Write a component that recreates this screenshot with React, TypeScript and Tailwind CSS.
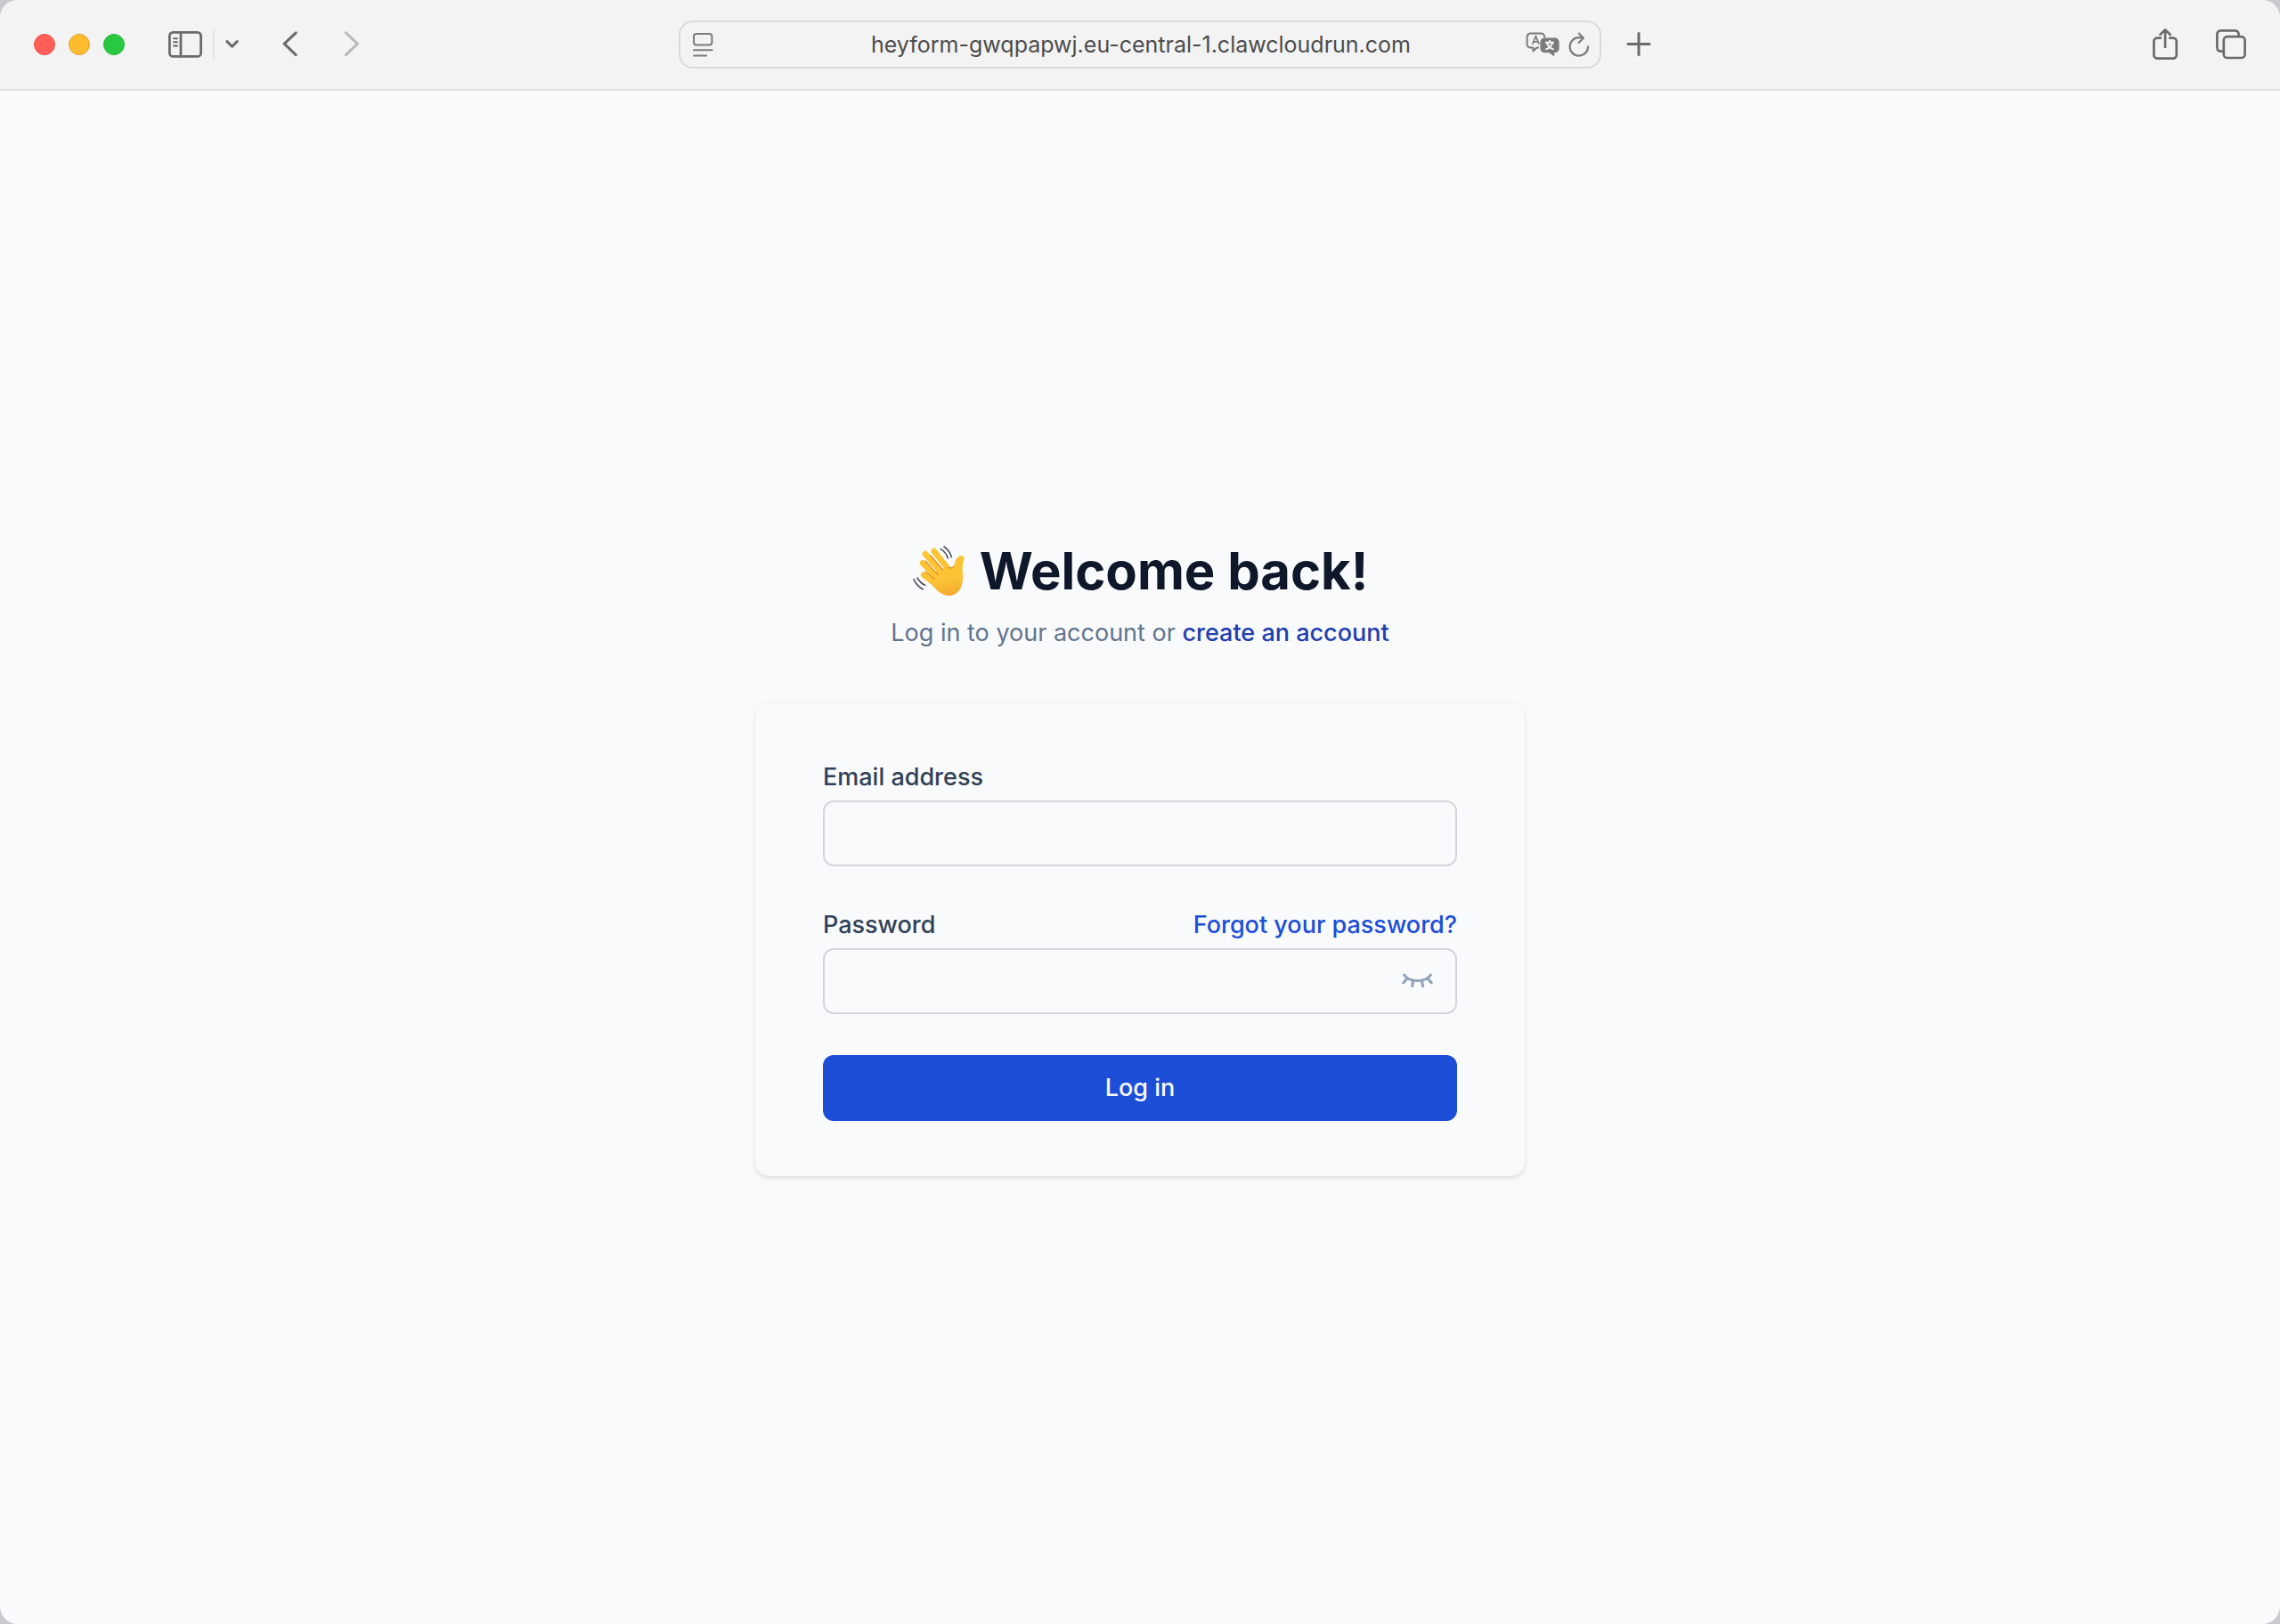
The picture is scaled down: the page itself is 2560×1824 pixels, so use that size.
import { useState } from 'react';
import type { ReactNode } from 'react';

function ToolButton({ label, className = '', children }: { label: string; className?: string; children: ReactNode }) {
  return (
    <button type="button" aria-label={label} className={`flex shrink-0 items-center justify-center ${className}`}>
      {children}
    </button>
  );
}

function TrafficLights() {
  return (
    <div className="flex shrink-0 gap-[15px]">
      <button type="button" aria-label="Close" className="size-6 rounded-full border border-[#e5544c] bg-[#ff5f57]" />
      <button type="button" aria-label="Minimize" className="size-6 rounded-full border border-[#e3a32d] bg-[#fdbc2e]" />
      <button type="button" aria-label="Zoom" className="size-6 rounded-full border border-[#27b83c] bg-[#28c840]" />
    </div>
  );
}

function BrowserBar() {
  return (
    <header className="grid grid-cols-[1fr_minmax(0,1036px)_1fr] items-center border-b-2 border-[#dfe0e2] bg-[#f3f3f3] px-[38px] py-[23px] text-[#6b6b6b]">
      <div className="flex items-center">
        <TrafficLights />
        <ToolButton label="Show sidebar" className="ml-[49px]">
          <svg width="38" height="30" viewBox="0 0 38 30" fill="none" stroke="currentColor" strokeWidth="2.8" strokeLinecap="round">
            <rect x="1.4" y="1.4" width="35.2" height="27" rx="4" />
            <path d="M14 1.5v27" />
            <path d="M6 8.2h4M6 12.3h4M6 16.5h4" strokeWidth="2" />
          </svg>
        </ToolButton>
        <div className="ml-3 h-[34px] w-[2px] bg-[#e6e6e6]" />
        <ToolButton label="Tab groups" className="ml-3">
          <svg width="16" height="12" viewBox="0 0 16 12" fill="none" stroke="currentColor" strokeWidth="3" strokeLinecap="round" strokeLinejoin="round">
            <path d="M2 2.6l5.6 5.6L13.2 2.6" />
          </svg>
        </ToolButton>
        <ToolButton label="Back" className="ml-12">
          <svg width="20" height="30" viewBox="0 0 20 30" fill="none" stroke="currentColor" strokeWidth="3" strokeLinecap="round" strokeLinejoin="round">
            <path d="M15.2 1.8L2.2 14.2l13 12.4" />
          </svg>
        </ToolButton>
        <ToolButton label="Forward" className="ml-12 text-[#b9b9b9]">
          <svg width="20" height="30" viewBox="0 0 20 30" fill="none" stroke="currentColor" strokeWidth="3" strokeLinecap="round" strokeLinejoin="round">
            <path d="M3.4 1.8L16.4 14.2l-13 12.4" />
          </svg>
        </ToolButton>
      </div>

      <div className="flex h-[54px] items-center rounded-2xl border-2 border-[#dadada] pr-[11px] pl-[13px] text-[#7b7b7b]">
        <ToolButton label="Page menu">
          <svg width="24" height="28" viewBox="0 0 24 28" fill="none" stroke="currentColor" strokeWidth="2" strokeLinecap="round">
            <rect x="2" y="2" width="20.4" height="12.4" rx="3" />
            <path d="M2 20.2h20.6M2 26.4h14.2" />
          </svg>
        </ToolButton>
        <input
          type="text"
          aria-label="Address"
          defaultValue="heyform-gwqpapwj.eu-central-1.clawcloudrun.com"
          className="ml-12 min-w-0 flex-1 bg-transparent text-center text-[25px] leading-8 text-[#4c4c4c] outline-none"
        />
        <ToolButton label="Translate">
          <svg width="38" height="28" viewBox="0 0 38 28" fill="none">
            <path
              d="M15 17.5h-2.4L8.4 21.4v-3.8H5.6A4 4 0 0 1 1.6 13.6V5.6A4 4 0 0 1 5.6 1.6h11.6a4 4 0 0 1 4 4v.6"
              stroke="currentColor"
              strokeWidth="2"
              strokeLinejoin="round"
            />
            <path d="M7.6 13.6L11.4 4.8l3.8 8.8M9 10.8h4.8" stroke="currentColor" strokeWidth="1.7" />
            <path d="M21 6.6h12a4.6 4.6 0 0 1 4.6 4.6v7.4a4.6 4.6 0 0 1-4.6 4.6h-.8v4.4l-5.6-4.4H21a4.6 4.6 0 0 1-4.6-4.6v-7.4A4.6 4.6 0 0 1 21 6.6z" fill="currentColor" />
            <path d="M22 11.8h10M27 9v2.8M30 12.4c-1.2 3.4-4 6-7.6 7.2M24 12.4c1.2 3.4 4 6 7.6 7.2" stroke="#f3f3f3" strokeWidth="2" />
          </svg>
        </ToolButton>
        <ToolButton label="Reload" className="ml-[10px]">
          <svg width="24" height="28" viewBox="0 0 24 28" fill="none" stroke="currentColor" strokeWidth="2.2" strokeLinecap="round" strokeLinejoin="round">
            <path d="M22 16.4A10.2 10.2 0 1 1 11.8 6.2c1.7 0 3.3.2 4.6.8" />
            <path d="M11.8 1.6l5 5.2-5.2 5.2" />
          </svg>
        </ToolButton>
      </div>

      <div className="flex items-center">
        <ToolButton label="New tab" className="ml-7">
          <svg width="28" height="28" viewBox="0 0 28 28" fill="none" stroke="currentColor" strokeWidth="3" strokeLinecap="round">
            <path d="M14 1.5v24M2 13.5h24" />
          </svg>
        </ToolButton>
        <ToolButton label="Share" className="ml-auto">
          <svg width="30" height="36" viewBox="0 0 30 36" fill="none" stroke="currentColor" strokeWidth="2.7" strokeLinecap="round" strokeLinejoin="round">
            <path d="M9 10.6H5.4a4 4 0 0 0-4 4v15a4 4 0 0 0 4 4h17.4a4 4 0 0 0 4-4v-15a4 4 0 0 0-4-4H19.2" />
            <path d="M14.1 21V1.6M8.6 6.8L14.1 1.4l5.5 5.4" />
          </svg>
        </ToolButton>
        <ToolButton label="Show all tabs" className="ml-[41px]">
          <svg width="34" height="34" viewBox="0 0 34 34" fill="none" stroke="currentColor" strokeWidth="2.7">
            <path d="M8.6 24.6H5.4a4 4 0 0 1-4-4V5.4a4 4 0 0 1 4-4h16.2a4 4 0 0 1 4 4v3" />
            <rect x="8.8" y="8.2" width="23.8" height="23.8" rx="4" />
          </svg>
        </ToolButton>
      </div>
    </header>
  );
}

function WavingHand() {
  return (
    <svg width="60" height="60" viewBox="30 30 180 180" fill="none" role="img" aria-label="Waving hand" strokeLinecap="round">
      <defs>
        <linearGradient id="skin" gradientUnits="userSpaceOnUse" x1="110" y1="40" x2="150" y2="206">
          <stop offset="0" stopColor="#fdc433" />
          <stop offset="0.7" stopColor="#fdc235" />
          <stop offset="1" stopColor="#f3a82e" />
        </linearGradient>
      </defs>
      <g stroke="url(#skin)" strokeWidth="20">
        <path d="M104 54L150 112" />
        <path d="M75 64L128 124" />
        <path d="M66 94L116 144" />
        <path d="M70 134L118 172" />
      </g>
      <path
        d="M150 110C160 114 168 112 172 102C175 88 181 72 194 70C204 69 208 76 205 84C199 98 200 112 201 134C202 158 198 176 186 190C174 204 154 208 136 200C118 192 104 178 92 162L112 116Z"
        fill="url(#skin)"
      />
      <g stroke="#dd8f25" strokeWidth="4">
        <path d="M92 68L134 117" />
        <path d="M75 87L117 134" />
        <path d="M75 122L105 148" />
        <path d="M152 109C160 112 166 111 170 106" />
      </g>
      <g stroke="#55595e" strokeWidth="5">
        <path d="M138 39C149 47 159 59 163 74" />
        <path d="M127 47C138 54 147 65 151 78" />
        <path d="M48 144C54 155 63 164 74 169" />
        <path d="M36 149C42 163 53 176 67 182" />
      </g>
    </svg>
  );
}

function ClosedEyeIcon() {
  return (
    <svg width="36" height="18" viewBox="0 0 36 18" fill="none" stroke="currentColor" strokeWidth="3" strokeLinecap="round" strokeLinejoin="round">
      <path d="M2.6 2C5.4 6 10.8 8.6 17.6 8.6s12-2.6 14.8-6.6" />
      <path d="M6.2 6L1.8 10.8M28.8 6l4.4 4.8M12.8 8.2l-1.2 6.4M22.4 8.2l1.2 6.4" />
    </svg>
  );
}

const fieldClass = 'h-[74px] w-full rounded-xl border-2 border-[#d4d6dd] bg-transparent px-6 text-[27px] text-slate-900 outline-none';

function LoginForm() {
  const [visible, setVisible] = useState(false);

  return (
    <form
      onSubmit={e => e.preventDefault()}
      className="mt-[58px] w-full max-w-[864px] rounded-2xl bg-[#f9fafc] px-[76px] py-[62px] text-[27px] leading-10 font-medium text-slate-700 shadow-[0_2px_6px_rgba(0,0,0,0.1),0_2px_4px_-2px_rgba(0,0,0,0.1)]"
    >
      <label htmlFor="email" className="block">Email address</label>
      <input id="email" type="email" className={`mt-[6px] block ${fieldClass}`} />

      <div className="mt-[46px] flex justify-between">
        <label htmlFor="password">Password</label>
        <a href="#forgot" className="text-[#1d4ed8]">Forgot your password?</a>
      </div>
      <div className="relative mt-[6px]">
        <input id="password" type={visible ? 'text' : 'password'} className={`block pr-20 ${fieldClass}`} />
        <button
          type="button"
          aria-label="Toggle password visibility"
          onClick={() => setVisible(!visible)}
          className="absolute inset-y-0 right-[26px] flex items-center text-slate-400"
        >
          <ClosedEyeIcon />
        </button>
      </div>

      <button type="submit" className="mt-[46px] block h-[74px] w-full rounded-xl bg-[#1d4ed8] text-slate-50">
        Log in
      </button>
    </form>
  );
}

export default function App() {
  return (
    <div className="min-h-screen bg-[#c8cacf] font-['Inter',sans-serif]">
      <div className="flex min-h-screen flex-col overflow-hidden rounded-[20px] bg-[#f9fafc]">
        <BrowserBar />
        <main className="flex flex-1 flex-col items-center justify-center px-8">
          <h1 className="flex items-center gap-4 text-[58px] leading-[72px] font-bold text-slate-900">
            <WavingHand />
            Welcome back!
          </h1>
          <p className="mt-3 text-[27px] leading-[44px] text-slate-500">
            Log in to your account or{' '}
            <a href="#sign-up" className="font-medium text-[#1e40af]">create an account</a>
          </p>
          <LoginForm />
        </main>
      </div>
    </div>
  );
}
